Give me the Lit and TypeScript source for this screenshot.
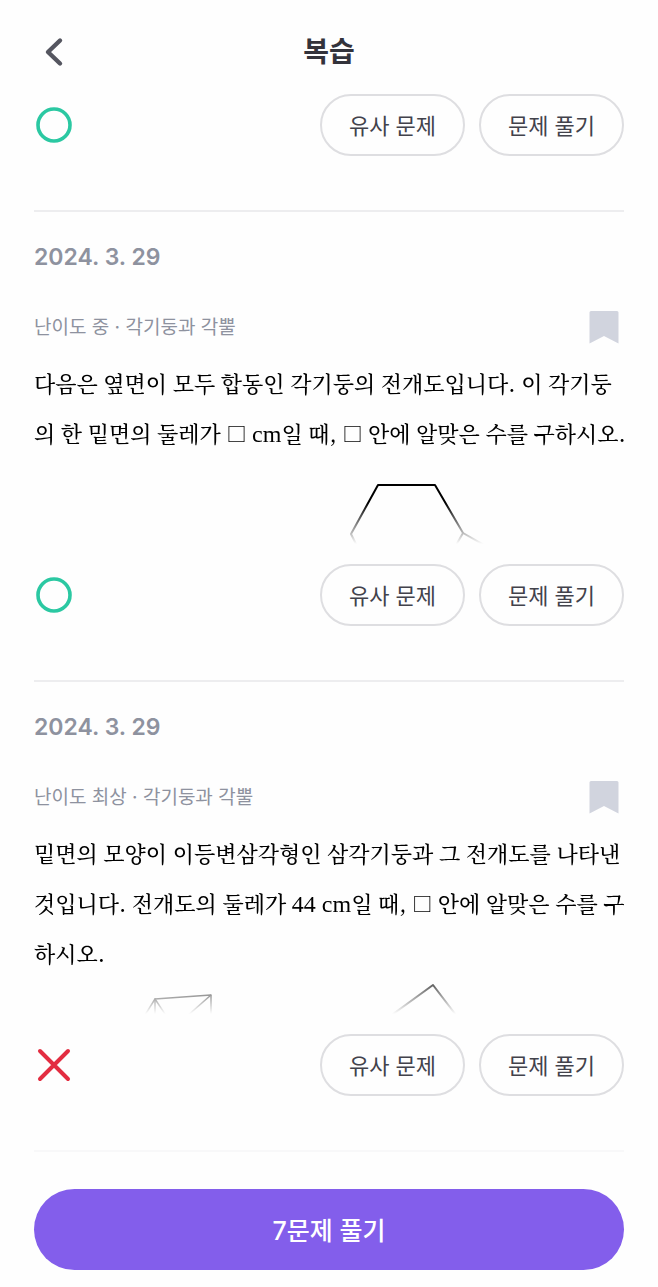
import { LitElement, html, css, svg, nothing, TemplateResult } from "lit";
import { customElement, property } from "lit/decorators.js";

interface Problem {
  date: string;
  level: string;
  unit: string;
  text: TemplateResult;
  figure: TemplateResult;
  correct: boolean;
}

const blank = html`<span class="blank">□</span>`;
const math = (value: string) => html`<span class="math">${value}</span>`;

const hexagonNet = html`
  <svg class="figure" viewBox="0 -1 594 120" role="img" aria-label="각기둥의 전개도">
    <g fill="none" stroke="#000" stroke-width="2" stroke-linejoin="round">
      <path d="M323 87 L317 75 L344 26 L401 26 L429 74 L421 88" />
      <path d="M429 74 L450 86" />
    </g>
  </svg>
`;

const prismNet = html`
  <svg class="figure" viewBox="0 -1 594 120" role="img" aria-label="삼각기둥과 전개도">
    <g fill="none" stroke="#222" stroke-width="2" stroke-linejoin="round">
      <path d="M121 50 V20 L177 16 V50" stroke-width="1.5" />
      <path d="M111 36 L121 20 L133 38" stroke-width="1.5" />
      <path d="M177 16 L152 38" stroke-width="1.5" />
      <path d="M355 38 L399 6 L425 40" />
    </g>
  </svg>
`;

const problems: Problem[] = [
  {
    date: "2024. 3. 29",
    level: "난이도 중",
    unit: "각기둥과 각뿔",
    text: html`다음은 옆면이 모두 합동인 각기둥의 전개도입니다. 이 각기둥의 한 밑면의 둘레가 ${blank} ${math("cm")}일 때, ${blank} 안에 알맞은 수를 구하시오.`,
    figure: hexagonNet,
    correct: true,
  },
  {
    date: "2024. 3. 29",
    level: "난이도 최상",
    unit: "각기둥과 각뿔",
    text: html`밑면의 모양이 이등변삼각형인 삼각기둥과 그 전개도를 나타낸 것입니다. 전개도의 둘레가 ${math("44 cm")}일 때, ${blank} 안에 알맞은 수를 구하시오.`,
    figure: prismNet,
    correct: false,
  },
];

@customElement("review-item")
class ReviewItem extends LitElement {
  @property({ attribute: false }) problem?: Problem;
  @property({ type: Boolean }) correct = false;

  static styles = css`
    :host {
      display: block;
      padding-bottom: 54px;
      border-bottom: 2px solid var(--line, #ededef);
    }
    button {
      font: inherit;
      cursor: pointer;
      background: none;
    }
    .date {
      margin: 0;
      padding: 29px 0 37px;
      font-size: 23px;
      line-height: 32px;
      font-weight: 600;
      color: #8e929f;
    }
    .meta {
      display: flex;
      justify-content: space-between;
      align-items: center;
      height: 34px;
      margin-bottom: 14px;
      font-size: 19px;
      line-height: 26px;
      color: #8e929f;
    }
    .topic {
      padding-top: 2px;
    }
    .bookmark {
      display: flex;
      padding: 0 5px;
      border: 0;
    }
    /* long problems are cut off and fade out at the bottom */
    .preview {
      height: 186px;
      margin: 0 -4px 20px 0;
      overflow: hidden;
      -webkit-mask-image: linear-gradient(#000 145px, transparent);
      mask-image: linear-gradient(#000 145px, transparent);
    }
    .text {
      margin: 0;
      font-family: "Noto Serif CJK KR", "Noto Serif KR", "Liberation Serif",
        "Noto Sans CJK KR", serif;
      font-size: 22px;
      line-height: 50px;
      font-weight: 500;
      color: #000;
      word-break: break-all;
    }
    .blank {
      font-size: 20px;
      line-height: 1;
    }
    .math {
      font-family: "Liberation Serif", serif;
      font-size: 24px;
      line-height: 1;
    }
    .figure {
      display: block;
      width: 100%;
    }
    .actions {
      display: flex;
      align-items: center;
      gap: 14px;
    }
    .mark {
      margin-right: auto;
    }
    .pill {
      width: 145px;
      height: 62px;
      padding: 0 0 2px;
      border: 2px solid #dedee1;
      border-radius: 31px;
      font-size: 22px;
      color: #42424b;
    }
  `;

  renderMark() {
    return html`
      <svg
        class="mark"
        width="40"
        height="40"
        fill="none"
        stroke-linecap="round"
        role="img"
        aria-label=${this.correct ? "정답" : "오답"}
      >
        ${this.correct
          ? svg`<circle cx="20" cy="20" r="16" stroke="#2bc8a2" stroke-width="3.6" />`
          : svg`<path d="M6 6 L34 34 M34 6 L6 34" stroke="#e32d41" stroke-width="4" />`}
      </svg>
    `;
  }

  renderProblem(p: Problem) {
    return html`
      <h2 class="date">${p.date}</h2>
      <div class="meta">
        <span class="topic">${p.level} · ${p.unit}</span>
        <button class="bookmark" aria-label="북마크">
          <svg width="30" height="34" viewBox="0 0 30 34">
            <path
              d="M2 1 H28 Q29.500 1 29.500 2.500 V33.500 L15 26 L0.500 33.500 V2.500 Q0.500 1 2 1 Z"
              fill="#d1d4de"
            />
          </svg>
        </button>
      </div>
      <div class="preview">
        <p class="text">${p.text}</p>
        ${p.figure}
      </div>
    `;
  }

  render() {
    return html`
      ${this.problem ? this.renderProblem(this.problem) : nothing}
      <div class="actions">
        ${this.renderMark()}
        <button class="pill">유사 문제</button>
        <button class="pill">문제 풀기</button>
      </div>
    `;
  }
}

@customElement("app-root")
class AppRoot extends LitElement {
  static styles = css`
    :host {
      display: block;
      min-height: 100vh;
      box-sizing: border-box;
      padding: 0 34px 17px;
      background: #fefefe;
      font-family: Inter, "Noto Sans CJK KR", sans-serif;
    }
    header {
      display: grid;
      grid-template-columns: 40px 1fr 40px;
      align-items: center;
      box-sizing: border-box;
      height: 94px;
      padding-top: 9px;
    }
    h1 {
      margin: 0;
      text-align: center;
      font-size: 28px;
      line-height: 42px;
      font-weight: 700;
      color: #33333b;
    }
    .back {
      display: flex;
      padding: 0;
      border: 0;
      background: none;
      cursor: pointer;
    }
    review-item:last-child {
      --line: #f8f8f9;
    }
    footer {
      padding-top: 37px;
    }
    .solve {
      display: block;
      width: 100%;
      height: 81px;
      padding: 0 0 2px;
      border: 0;
      border-radius: 41px;
      background: #835eeb;
      color: #fff;
      font: inherit;
      font-size: 25px;
      font-weight: 500;
      cursor: pointer;
    }
  `;

  render() {
    return html`
      <header>
        <button class="back" aria-label="뒤로">
          <svg width="40" height="40" fill="none">
            <path
              d="M26 8.500 L14 20 L26 31.500"
              stroke="#555660"
              stroke-width="4.4"
              stroke-linecap="round"
              stroke-linejoin="round"
            />
          </svg>
        </button>
        <h1>복습</h1>
      </header>
      <main>
        <review-item correct></review-item>
        ${problems.map(
          (p) => html`<review-item .problem=${p} ?correct=${p.correct}></review-item>`
        )}
      </main>
      <footer>
        <button class="solve">7문제 풀기</button>
      </footer>
    `;
  }
}
